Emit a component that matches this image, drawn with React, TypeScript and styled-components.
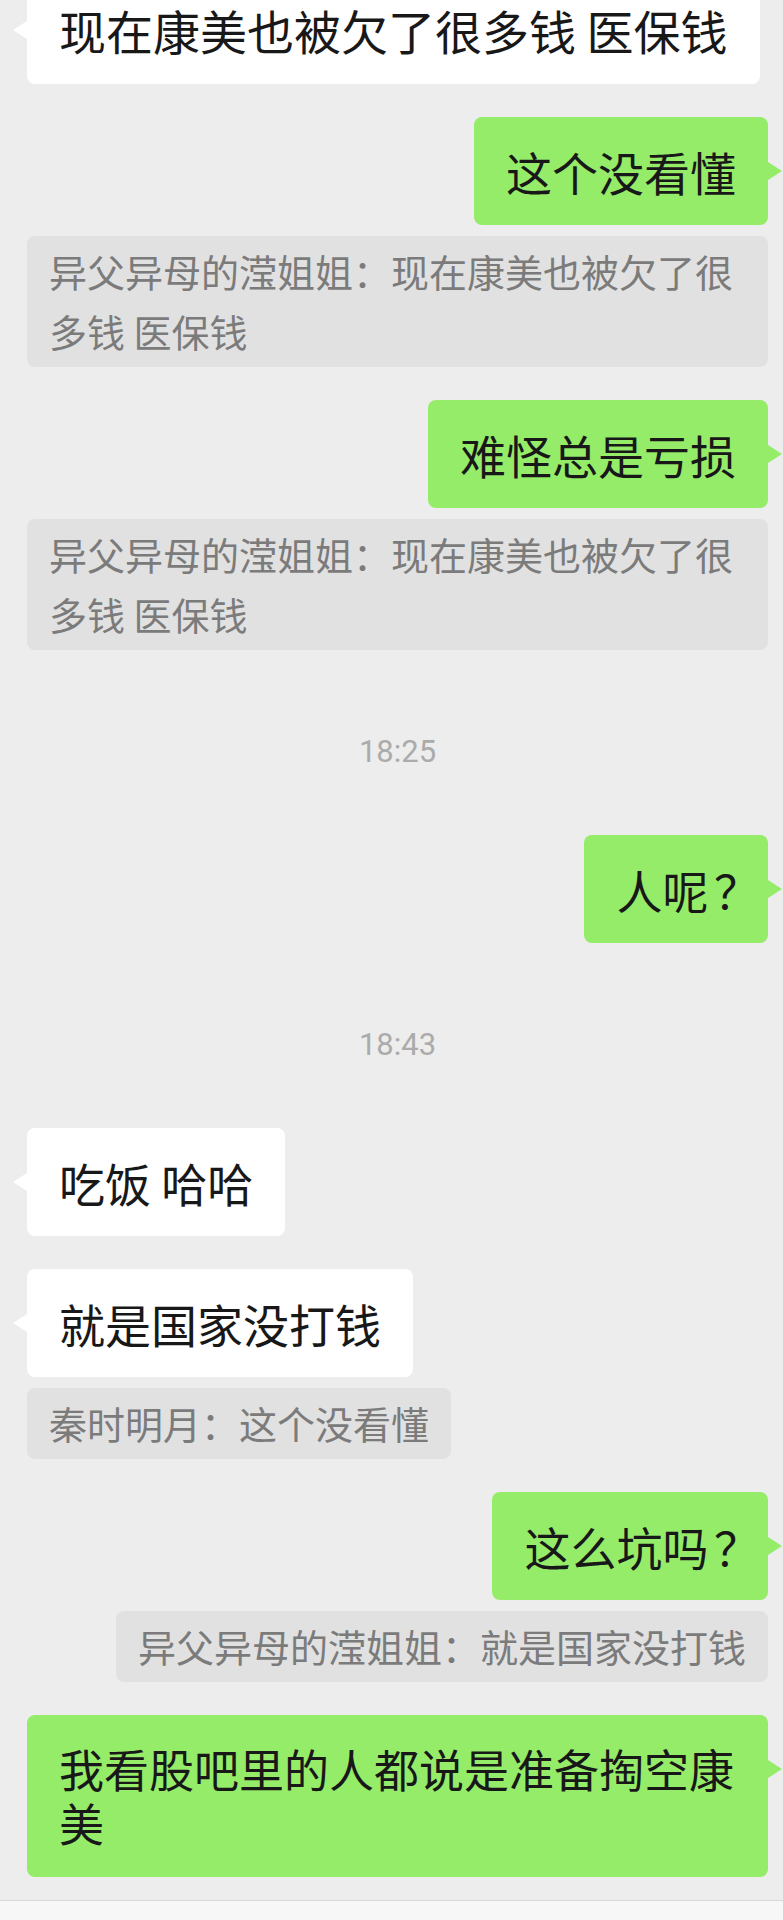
import React from "react";
import styled, { createGlobalStyle, css } from "styled-components";

type Side = "left" | "right";

type Item =
  | { kind: "msg"; side: Side; text: string; size?: number }
  | { kind: "quote"; side: Side; text: string }
  | { kind: "time"; text: string };

const items: Item[] = [
  { kind: "msg", side: "left", text: "现在康美也被欠了很多钱 医保钱", size: 47 },
  { kind: "msg", side: "right", text: "这个没看懂" },
  { kind: "quote", side: "left", text: "异父异母的滢姐姐：现在康美也被欠了很多钱 医保钱" },
  { kind: "msg", side: "right", text: "难怪总是亏损" },
  { kind: "quote", side: "left", text: "异父异母的滢姐姐：现在康美也被欠了很多钱 医保钱" },
  { kind: "time", text: "18:25" },
  { kind: "msg", side: "right", text: "人呢？" },
  { kind: "time", text: "18:43" },
  { kind: "msg", side: "left", text: "吃饭 哈哈" },
  { kind: "msg", side: "left", text: "就是国家没打钱" },
  { kind: "quote", side: "left", text: "秦时明月：这个没看懂" },
  { kind: "msg", side: "right", text: "这么坑吗？" },
  { kind: "quote", side: "right", text: "异父异母的滢姐姐：就是国家没打钱" },
  { kind: "msg", side: "right", text: "我看股吧里的人都说是准备掏空康美", size: 45 },
];

const GlobalStyle = createGlobalStyle`
  html, body {
    margin: 0;
    padding: 0;
    background: #ededed;
  }
  body {
    font-family: "Noto Sans CJK SC", "Noto Sans", sans-serif;
    overflow: hidden;
  }
`;

const Screen = styled.div`
  width: 783px;
  height: 1920px;
  overflow: hidden;
  display: flex;
  flex-direction: column;
  background: #ededed;
`;

const Thread = styled.div`
  flex: 1;
  min-height: 0;
  display: flex;
  flex-direction: column;
  margin-top: -24px;
  padding: 0 15px 0 27px;
`;

const MsgRow = styled.div<{ $side: Side }>`
  display: flex;
  justify-content: ${(p) => (p.$side === "right" ? "flex-end" : "flex-start")};
  margin-top: 33px;
  &:first-child {
    margin-top: 0;
  }
`;

const Bubble = styled.div<{ $side: Side; $size?: number }>`
  position: relative;
  box-sizing: border-box;
  max-width: 100%;
  padding: 27px 32px;
  border-radius: 8px;
  background: ${(p) => (p.$side === "right" ? "#95ec69" : "#ffffff")};
  color: #181818;
  font-size: ${(p) => p.$size ?? 46}px;
  line-height: 54px;
  word-break: break-all;

  &::after {
    content: "";
    position: absolute;
    top: 45px;
    width: 14px;
    height: 18px;
    background: inherit;
    ${(p) =>
      p.$side === "right"
        ? css`
            right: -14px;
            clip-path: polygon(0 0, 100% 50%, 0 100%);
          `
        : css`
            left: -14px;
            clip-path: polygon(100% 0, 0 50%, 100% 100%);
          `}
  }
`;

const Punct = styled.span`
  display: inline-block;
  box-sizing: border-box;
  width: 0.6em;
  padding-left: 0.12em;
  white-space: nowrap;
`;

const QuoteRow = styled.div<{ $side: Side }>`
  display: flex;
  justify-content: ${(p) => (p.$side === "right" ? "flex-end" : "flex-start")};
  margin-top: 11px;
`;

const Quote = styled.div`
  box-sizing: border-box;
  max-width: 100%;
  padding: 5px 22px 6px;
  border-radius: 8px;
  background: #e1e1e1;
  color: #7b7b7b;
  font-size: 38px;
  line-height: 60px;
  word-break: break-all;
`;

const TimeStamp = styled.div`
  padding: 86px 0 35px;
  text-align: center;
  font-family: Roboto, "Noto Sans", sans-serif;
  font-size: 31px;
  line-height: 31px;
  color: #ababab;
`;

const InputBar = styled.div`
  flex-shrink: 0;
  box-sizing: border-box;
  height: 20px;
  background: #f7f7f7;
  border-top: 1px solid #d9d9d9;
`;

function renderText(text: string) {
  const parts = text.split("？");
  return parts.map((part, i) => (
    <React.Fragment key={i}>
      {part}
      {i < parts.length - 1 && <Punct>？</Punct>}
    </React.Fragment>
  ));
}

export default function App() {
  return (
    <>
      <GlobalStyle />
      <Screen>
        <Thread>
          {items.map((it, i) => {
            if (it.kind === "time") {
              return <TimeStamp key={i}>{it.text}</TimeStamp>;
            }
            if (it.kind === "quote") {
              return (
                <QuoteRow key={i} $side={it.side}>
                  <Quote>{it.text}</Quote>
                </QuoteRow>
              );
            }
            return (
              <MsgRow key={i} $side={it.side}>
                <Bubble $side={it.side} $size={it.size}>
                  {renderText(it.text)}
                </Bubble>
              </MsgRow>
            );
          })}
        </Thread>
        <InputBar />
      </Screen>
    </>
  );
}
